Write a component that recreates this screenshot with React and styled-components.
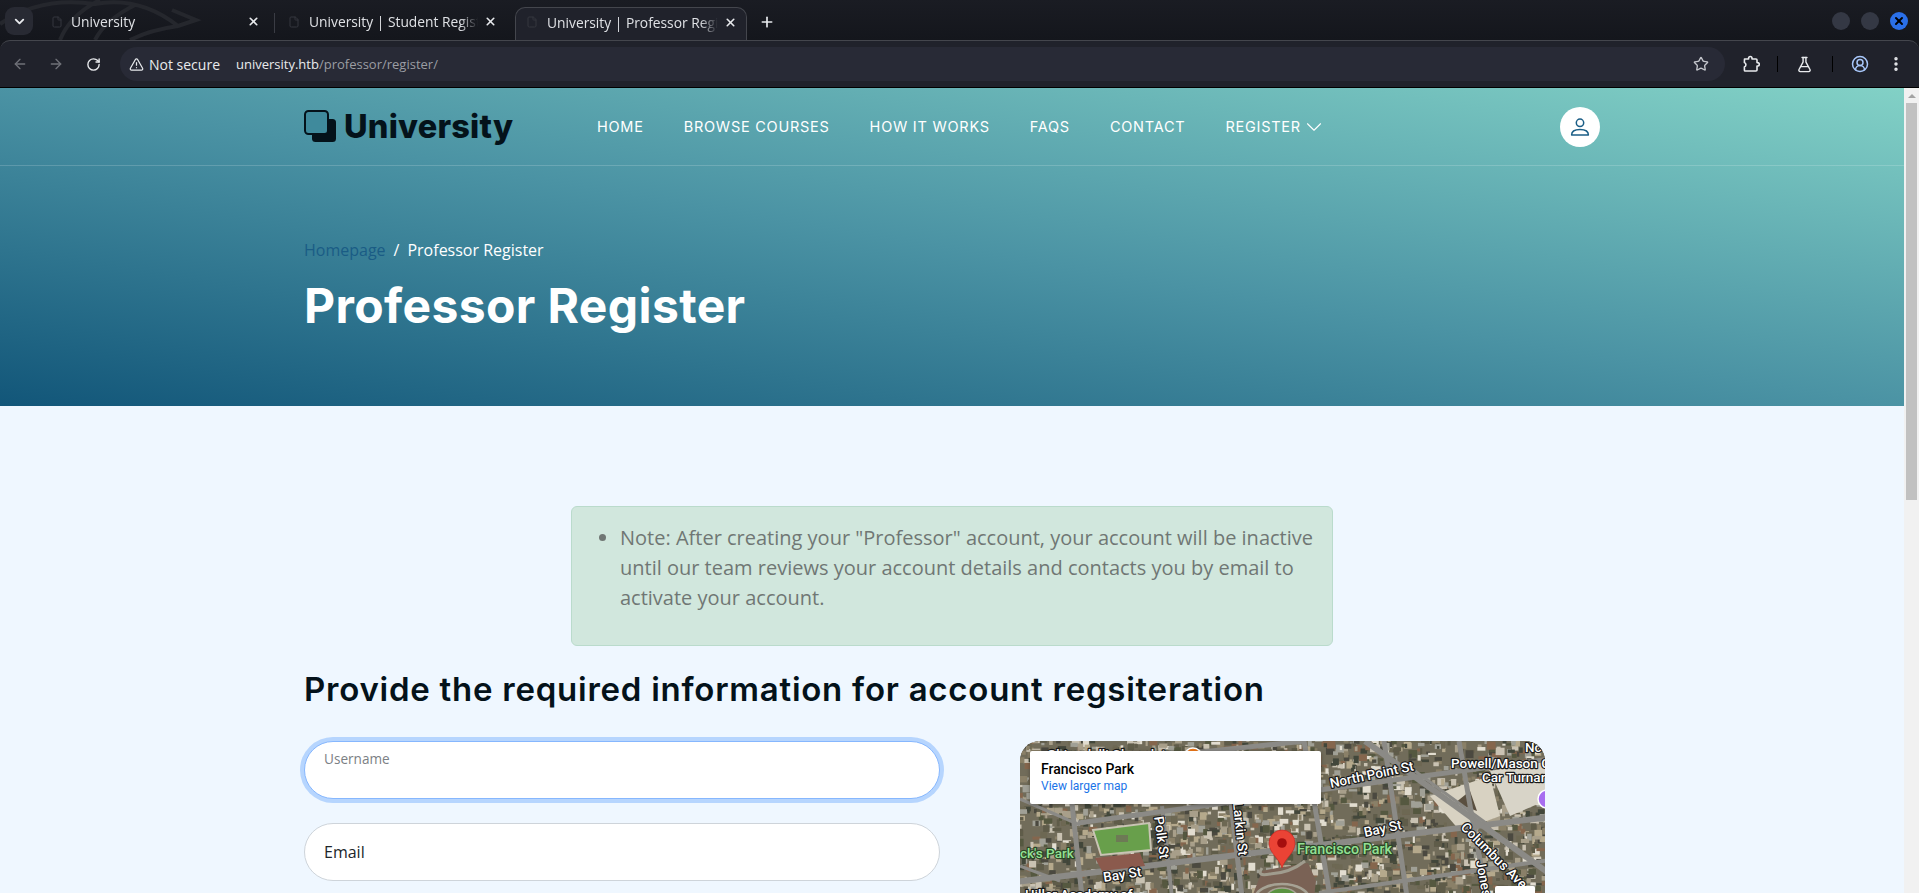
import React from "react";
import styled, { createGlobalStyle } from "styled-components";
import { ChevronDown, X, Plus, ArrowLeft, ArrowRight, RotateCw, Star, FlaskConical, CircleUserRound, EllipsisVertical, TriangleAlert, File } from "lucide-react";

const HEAD = `Inter, "Liberation Sans", sans-serif`;
const BODY = `"Open Sans", "Noto Sans", sans-serif`;

const Global = createGlobalStyle`
  html, body { margin: 0; padding: 0; height: 100%; overflow: hidden; background: #16181f; }
  #root { height: 100%; }
  * { box-sizing: border-box; }
`;

const Shell = styled.div`display: flex; flex-direction: column; height: 893px; overflow: hidden; background: #15171d;`;
const TabStrip = styled.div`
  position: relative; height: 40px; flex: none; display: flex; align-items: flex-end; padding-left: 5px;
  background: linear-gradient(#1a1c23, #14161c); color: #e8eaed; font: 13.8px ${BODY};
`;
const Dragon = styled.svg`position: absolute; left: 0; top: 0; pointer-events: none;`;
const TabMenu = styled.div`
  position: relative; width: 28px; height: 28px; margin: 0 0 5px; border-radius: 9px; background: #282a33;
  display: flex; align-items: center; justify-content: center; color: #e8eaed;
`;
const Tab = styled.div`
  position: relative; height: 33px; width: ${p => p.$w}px; margin-left: ${p => p.$ml || 0}px; display: flex; align-items: center;
  padding: 0 9px 4px ${p => p.$pl}px; gap: 6px; border-radius: 10px 10px 0 0;
  background: ${p => p.$active ? "#20222b" : "transparent"};
  border: ${p => p.$active ? "1px solid #44464d" : "0"}; border-bottom: 0;
`;
const TabTitle = styled.span`flex: 1; white-space: nowrap; overflow: hidden; margin-left: ${p => p.$ml || 0}px; color: #dfe1e5; -webkit-mask-image: linear-gradient(to left, transparent, #000 18px);`;
const TabDivider = styled.div`width: 1px; height: 20px; background: #3a3c44; margin: 0 0 7px 5px; position: relative;`;
const Fav = styled(File)`color: #34363e; flex: none;`;
const PlusBtn = styled.div`position: relative; margin: 0 0 10px 12px; display: flex; color: #e8eaed;`;
const WinButtons = styled.div`position: absolute; right: 11px; top: 12px; display: flex; gap: 11px;`;
const WinBtn = styled.div`
  width: 18px; height: 18px; border-radius: 50%; background: ${p => p.$blue ? "#2a6fe8" : "#343844"};
  display: flex; align-items: center; justify-content: center; color: #000;
`;
const Toolbar = styled.div`
  height: 48px; flex: none; background: #20222b; border-top: 1px solid #44464d; border-bottom: 1px solid #000;
  border-radius: 10px 10px 0 0; display: flex; align-items: center; padding: 0 0 0 11px; color: #e8eaed;
`;
const NavIcon = styled.div`width: 18px; display: flex; justify-content: center; margin-right: ${p => p.$mr}px; color: ${p => p.$dim ? "#6f7178" : "#e8eaed"};`;
const Omni = styled.div`
  width: 1605px; height: 34px; margin-left: 9px; border-radius: 17px; background: #282a36; display: flex; align-items: center;
  font: 14px ${BODY}; padding: 0 16px 0 5px;
`;
const Chip = styled.div`display: flex; align-items: center; gap: 5px; width: 103px; padding-left: 4px; height: 28px; color: #e8eaed;`;
const Url = styled.div`margin-left: 8px; font-size: 13px; color: #e8eaed; flex: 1;`;
const UrlPath = styled.span`color: #9b9da3;`;
const ToolIcons = styled.div`display: flex; align-items: center; margin-left: 16px; color: #e8eaed;`;
const ToolIcon = styled.div`width: 20px; display: flex; justify-content: center; margin-left: ${p => p.$ml || 0}px; color: ${p => p.$c || "inherit"};`;
const ToolDiv = styled.div`width: 1px; height: 16px; background: #000; margin-left: ${p => p.$ml}px;`;

const Viewport = styled.div`flex: 1; min-height: 0; display: flex;`;
const Page = styled.div`flex: 1; min-width: 0; overflow: hidden; background: #eff7ff;`;
const ScrollBar = styled.div`width: 15px; flex: none; background: #f1f1f1; padding: 15px 2px 0; position: relative;`;
const ScrollArrow = styled.div`position: absolute; top: 6px; left: 4px; width: 0; height: 0; border: 4px solid transparent; border-top: 0; border-bottom: 4px solid #a3a3a3;`;
const Thumb = styled.div`height: 397px; background: #c1c1c1;`;

const Hero = styled.header`
  height: 318px; background: linear-gradient(to bottom left, #82d1c6 0%, #4b93a4 50%, #125679 100%);
`;
const NavBar = styled.div`height: 78px; border-bottom: 1px solid rgba(255,255,255,.17);`;
const Container = styled.div`width: 1296px; display: flex; align-items: center; height: 100%; margin-left: 304px;`;
const Logo = styled.div`display: flex; align-items: center; gap: 7px; width: 293px; color: #04121a; font: 800 32.5px ${HEAD}; letter-spacing: .2px;`;
const Menu = styled.nav`display: flex; gap: 40px; align-items: center;`;
const MenuItem = styled.span`
  font: 400 14.5px ${HEAD}; color: #fff; letter-spacing: .75px; text-transform: uppercase; display: flex; align-items: center; white-space: nowrap;
`;
const Caret = styled(ChevronDown)`margin: -6px -6px -6px 0;`;
const Avatar = styled.div`
  width: 40px; height: 40px; border-radius: 50%; background: #fff; margin-left: auto; display: flex; align-items: center; justify-content: center; color: #1b5e86;
`;
const HeroBody = styled.div`padding: 72px 0 0 304px;`;
const Crumbs = styled.div`font: 16px/24px ${BODY}; color: #fff; display: flex; gap: 8px;`;
const CrumbLink = styled.span`color: #1a5c85;`;
const Title = styled.h1`margin: 16px 0 0; font: 700 48px/56px ${HEAD}; color: #fff; letter-spacing: .38px;`;

const Main = styled.main`padding: 100px 0 0 304px;`;
const Alert = styled.div`
  width: 762px; height: 140px; margin-left: 267px; background: #d1e7dd; border: 1px solid #badbcc; border-radius: 6px;
  padding: 16px 0 0 16px; font: 20px/30px ${BODY}; color: #707774;
`;
const AlertList = styled.ul`margin: 0; padding: 0 16px 0 32px;`;
const Heading = styled.h2`margin: 18px 0 0; font: 600 33px/50px ${HEAD}; color: #04121a; letter-spacing: .75px;`;
const Columns = styled.div`display: grid; grid-template-columns: 636px 525px; column-gap: 80px; margin-top: 27px;`;
const Fields = styled.div`display: flex; flex-direction: column; gap: 24px;`;
const Field = styled.div`
  height: 58px; border-radius: 29px; background: #fff; padding: 0 19px; display: flex; color: #212529;
  border: 1px solid ${p => p.$focus ? "#86b7fe" : "#ced4da"};
  box-shadow: ${p => p.$focus ? "0 0 0 4px rgba(13,110,253,.25)" : "none"};
  align-items: ${p => p.$focus ? "flex-start" : "center"};
  font: ${p => p.$focus ? "13.6px" : "16px"} ${BODY};
  padding-top: ${p => p.$focus ? "7px" : "0"};
`;
const FieldLabel = styled.span`color: ${p => p.$focus ? "#7b8084" : "#212529"};`;
const MapFrame = styled.div`position: relative; height: 300px; border-radius: 20px; overflow: hidden; background: #716c5a;`;
const MapCard = styled.div`
  position: absolute; left: 10px; top: 10px; width: 291px; height: 53px; background: #fff; border-radius: 2px; padding: 9px 0 0 11px;
  box-shadow: 0 1px 4px rgba(0,0,0,.3);
`;
const MapName = styled.div`font: 500 14px/18px Roboto, sans-serif; color: #000;`;
const MapLink = styled.div`font: 12px/17px Roboto, sans-serif; color: #1a73e8;`;
const MapControl = styled.div`position: absolute; left: 475px; top: 145px; width: 40px; height: 40px; background: #fff; border-radius: 2px;`;
const MapSvg = styled.svg`display: block;`;
const RoadLabel = styled.text`
  font: 500 ${p => p.$s || 13.5}px Roboto, sans-serif; fill: ${p => p.$green ? "#93e093" : "#fff"}; stroke: ${p => p.$green ? "#2b4526" : "#1a1a1a"};
  stroke-width: 2.4px; paint-order: stroke; stroke-linejoin: round;
`;

const palette = ["#a89f8a", "#5f5b4a", "#c9c2b2", "#4b4a3f", "#8a8067", "#e2ddd0", "#6d6752", "#85664e", "#43463a", "#a0a096", "#b5a98c", "#55583f"];
const buildings = (() => {
  let s = 12345; const r = () => (s = (s * 16807) % 2147483647) / 2147483647;
  const out = [];
  for (let i = 0; i < 2600; i++) {
    out.push({ x: r() * 530 - 5, y: r() * 156 - 3, w: 2 + r() * 7, h: 2 + r() * 6, c: palette[Math.floor(r() * palette.length)] });
  }
  return out;
})();

const roads = [
  [-5, 141, 530, 76, 6], [58, 82, 299, 49, 5], [299, 49, 530, 18, 5], [60, 24, 285, 0, 5], [0, 58, 60, 84, 3],
  [52, 62, 62, 156, 5], [142, 65, 152, 156, 4], [211, 62, 222, 156, 5], [284, 0, 310, 156, 5], [364, 0, 387, 156, 5],
  [345, 0, 530, 133, 6], [439, 0, 452, 76, 5], [452, 76, 467, 156, 5], [299, 152, 530, 119, 4], [0, 125, 40, 140, 3], [395, 30, 470, 85, 3],
];

function MapArt() {
  return (
    <MapSvg width="525" height="300" viewBox="0 0 525 300">
      <defs>
        <filter id="soft"><feGaussianBlur stdDeviation=".45" /></filter>
      </defs>
      <rect width="525" height="300" fill="#716c5a" />
      <g filter="url(#soft)">
        {buildings.map((b, i) => <rect key={i} x={b.x} y={b.y} width={b.w} height={b.h} fill={b.c} />)}
        <polygon points="410,55 470,35 480,75 440,90" fill="#d8d2c2" />
        <polygon points="435,62 450,50 457,70" fill="#5a5040" />
        <polygon points="470,30 525,20 525,60 490,75" fill="#d8d4c8" />
        {roads.map(([a, b, c, d, w], i) => <line key={i} x1={a} y1={b} x2={c} y2={d} stroke="#8b8a86" strokeWidth={w} />)}
        <polygon points="73,89 129,82 131,109 81,114" fill="#689f4c" stroke="#c9c4b4" strokeWidth="2" />
        <rect x="96" y="94" width="12" height="7" fill="#6d7a55" />
        <polygon points="75,117 120,112 125,125 82,130" fill="#8b5a4e" />
        <path d="M242 130 Q261 126 288 122 L296 140 L294 156 L232 156 Z" fill="#7a6254" />
        <path d="M242 127 Q236 136 250 133 Q270 132 285 120" fill="none" stroke="#a09c8e" strokeWidth="3" />
        <ellipse cx="262" cy="158" rx="27" ry="15" fill="#7a6a5a" stroke="#a6a294" strokeWidth="2.5" />
        <ellipse cx="262" cy="159" rx="17" ry="12" fill="#5a9440" stroke="#a6a294" strokeWidth="1.5" />
      </g>
      <circle cx="173" cy="16" r="9" fill="#f07a1a" stroke="#fff" strokeWidth="1.5" />
      <circle cx="527" cy="58" r="9" fill="#a86ef0" stroke="#fff" strokeWidth="1.5" />
      <circle cx="121" cy="160" r="8" fill="#5f7d8c" stroke="#fff" strokeWidth="1.5" />
      <RoadLabel x="27" y="18">Ghirardelli Chocolate</RoadLabel>
      <RoadLabel x="0" y="117" $green>ck's Park</RoadLabel>
      <RoadLabel transform="translate(134 76) rotate(82)">Polk St</RoadLabel>
      <RoadLabel transform="translate(213 62) rotate(84)">Larkin St</RoadLabel>
      <RoadLabel transform="translate(311 47) rotate(-12)">North Point St</RoadLabel>
      <RoadLabel transform="translate(345 96) rotate(-12)">Bay St</RoadLabel>
      <RoadLabel transform="translate(84 141) rotate(-9)">Bay St</RoadLabel>
      <RoadLabel x="431" y="27">Powell/Mason C</RoadLabel>
      <RoadLabel x="462" y="41">Car Turnar</RoadLabel>
      <RoadLabel x="505" y="11">Nc</RoadLabel>
      <RoadLabel transform="translate(440 87) rotate(45)">Columbus Ave</RoadLabel>
      <RoadLabel transform="translate(456 120) rotate(80)">Jones</RoadLabel>
      <RoadLabel x="277" y="113" $s={14.3} $green>Francisco Park</RoadLabel>
      <RoadLabel x="5" y="158">Hiller Academy of</RoadLabel>
      <path d="M262 127 C259 117 249 112 249 102 A13 13 0 0 1 275 102 C275 112 265 117 262 127 Z" fill="#ea4335" stroke="#c5221f" strokeWidth=".6" />
      <circle cx="262" cy="102" r="4.8" fill="#a50e0e" />
    </MapSvg>
  );
}

const PuzzleIcon = () => (
  <svg width="18" height="18" viewBox="0 0 18 18" fill="none" stroke="currentColor" strokeWidth="1.6" strokeLinejoin="round">
    <path d="M2.5 4 H6.6 V3.2 a1.7 1.7 0 0 1 3.4 0 V4 H14 a1 1 0 0 1 1 1 V7.6 h.6 a1.7 1.7 0 0 1 0 3.4 H15 V15 a1 1 0 0 1 -1 1 H3.2 a.8.8 0 0 1 -.8 -.8 V12 a2.5 2.5 0 0 0 0 -4.6 Z" />
  </svg>
);

const PersonIcon = () => (
  <svg width="20" height="20" viewBox="0 0 20 20" fill="none" stroke="currentColor" strokeWidth="1.5" strokeLinejoin="round">
    <circle cx="10" cy="5.8" r="3.7" />
    <path d="M1.6 18 C1.6 14 5.2 12.4 10 12.4 C14.8 12.4 18.4 14 18.4 18 Z" />
  </svg>
);

export default function App() {
  return (
    <Shell>
      <Global />
      <TabStrip>
        <Dragon width="260" height="40" viewBox="0 0 260 40" fill="none" stroke="#25272d" strokeWidth="4">
          <path d="M0 24 Q40 -4 95 4 Q140 -4 178 26 L196 20 L172 10 M60 40 Q70 15 100 0 M95 40 Q105 20 135 5 M130 40 Q150 30 178 26" />
        </Dragon>
        <TabMenu><ChevronDown size={15} strokeWidth={3} /></TabMenu>
        <Tab $w={236} $pl={18}><Fav size={12} /><TabTitle $ml={2}>University</TabTitle><X size={13} strokeWidth={3} /></Tab>
        <TabDivider />
        <Tab $w={231} $pl={13}><Fav size={12} /><TabTitle $ml={3}>University | Student Registration</TabTitle><X size={13} strokeWidth={3} /></Tab>
        <Tab $active $ml={9} $w={232} $pl={10}><Fav size={12} /><TabTitle $ml={3}>University | Professor Register</TabTitle><X size={13} strokeWidth={3} /></Tab>
        <PlusBtn><Plus size={16} strokeWidth={2.5} /></PlusBtn>
        <WinButtons>
          <WinBtn /><WinBtn /><WinBtn $blue><X size={12} strokeWidth={4} /></WinBtn>
        </WinButtons>
      </TabStrip>
      <Toolbar>
        <NavIcon $dim $mr={18}><ArrowLeft size={16} /></NavIcon>
        <NavIcon $dim $mr={19}><ArrowRight size={16} /></NavIcon>
        <NavIcon $mr={9}><RotateCw size={15} strokeWidth={2.2} /></NavIcon>
        <Omni>
          <Chip><TriangleAlert size={15} /> Not secure</Chip>
          <Url>university.htb<UrlPath>/professor/register/</UrlPath></Url>
          <Star size={16} color="#c4c6cc" />
        </Omni>
        <ToolIcons>
          <ToolIcon><PuzzleIcon /></ToolIcon>
          <ToolDiv $ml={16} />
          <ToolIcon $ml={16}><FlaskConical size={17} strokeWidth={2} /></ToolIcon>
          <ToolDiv $ml={18} />
          <ToolIcon $ml={17} $c="#a8c7fa"><CircleUserRound size={18} /></ToolIcon>
          <ToolIcon $ml={16}><EllipsisVertical size={18} strokeWidth={2.6} /></ToolIcon>
        </ToolIcons>
      </Toolbar>
      <Viewport>
        <Page>
          <Hero>
            <NavBar>
              <Container>
                <Logo>
                  <svg width="33" height="33" viewBox="0 0 33 33" fill="none">
                    <rect x="8" y="9" width="24" height="23" rx="3.5" fill="#04121a" />
                    <rect x="1" y="1" width="23" height="23" rx="3.5" fill="#3f8a9c" stroke="#04121a" strokeWidth="2" />
                  </svg>
                  University
                </Logo>
                <Menu>
                  <MenuItem>Home</MenuItem>
                  <MenuItem>Browse Courses</MenuItem>
                  <MenuItem>How It Works</MenuItem>
                  <MenuItem>FAQs</MenuItem>
                  <MenuItem>Contact</MenuItem>
                  <MenuItem>Register <Caret size={26} strokeWidth={1} /></MenuItem>
                </Menu>
                <Avatar><PersonIcon /></Avatar>
              </Container>
            </NavBar>
            <HeroBody>
              <Crumbs><CrumbLink>Homepage</CrumbLink><span>/</span><span>Professor Register</span></Crumbs>
              <Title>Professor Register</Title>
            </HeroBody>
          </Hero>
          <Main>
            <Alert>
              <AlertList>
                <li>Note: After creating your "Professor" account, your account will be inactive until our team reviews your account details and contacts you by email to activate your account.</li>
              </AlertList>
            </Alert>
            <Heading>Provide the required information for account regsiteration</Heading>
            <Columns>
              <Fields>
                <Field $focus><FieldLabel $focus>Username</FieldLabel></Field>
                <Field><FieldLabel>Email</FieldLabel></Field>
              </Fields>
              <MapFrame>
                <MapArt />
                <MapCard>
                  <MapName>Francisco Park</MapName>
                  <MapLink>View larger map</MapLink>
                </MapCard>
                <MapControl />
              </MapFrame>
            </Columns>
          </Main>
        </Page>
        <ScrollBar><ScrollArrow /><Thumb /></ScrollBar>
      </Viewport>
    </Shell>
  );
}
